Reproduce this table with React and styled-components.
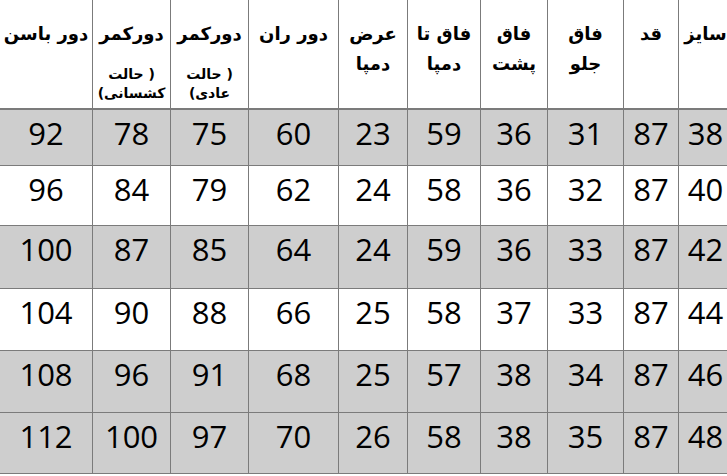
import React from "react";
import styled, { createGlobalStyle } from "styled-components";

const GlobalStyle = createGlobalStyle`
  html, body {
    margin: 0;
    padding: 0;
    background: #ffffff;
  }
`;

const LINE = "#7b7b7b";
const RLM = "\u200F";

const Frame = styled.div`
  width: 727px;
  height: 476px;
  overflow: hidden;
  background: #ffffff;
`;

const Table = styled.div`
  width: 732px;
  display: flex;
  flex-direction: column;
`;

const Row = styled.div`
  display: grid;
  grid-template-columns: 93px 78px 78px 90px 69px 73px 67px 76px 55px 53px;
  height: ${(props) => props.h}px;
  background: ${(props) => (props.shaded ? "#cecece" : "#ffffff")};
  border-bottom: ${(props) => (props.head ? 2 : 1)}px solid ${LINE};
  box-sizing: border-box;
`;

const HeadCell = styled.div`
  border-right: 1px solid ${LINE};
  box-sizing: border-box;
  direction: rtl;
  text-align: center;
  padding-top: 19px;
  font-family: "DejaVu Sans", "Liberation Sans", sans-serif;
  font-weight: bold;
  font-size: 18px;
  line-height: 30px;
  color: #000;
  white-space: nowrap;

  &:last-child {
    border-right: none;
  }
`;

const SubNote = styled.div`
  margin-top: 16px;
  font-size: 14px;
  line-height: 19px;
`;

const Cell = styled.div`
  border-right: 1px solid ${LINE};
  box-sizing: border-box;
  text-align: center;
  padding-top: 8px;
  font-family: "Open Sans", "Liberation Sans", sans-serif;
  font-size: 31px;
  line-height: 31px;
  color: #000;

  &:last-child {
    border-right: none;
  }
`;

// RLM marks keep the wrapped brackets on the reading side seen in the sheet
const headers = [
  { lines: ["دور باسن"] },
  { lines: ["دورکمر"], note: [RLM + "( حالت", "کشسانی)" + RLM] },
  { lines: ["دورکمر"], note: [RLM + "( حالت", "عادی)" + RLM] },
  { lines: ["دور ران"] },
  { lines: ["عرض", "دمپا"] },
  { lines: ["فاق تا", "دمپا"] },
  { lines: ["فاق", "پشت"] },
  { lines: ["فاق", "جلو"] },
  { lines: ["قد"] },
  { lines: ["سایز"] },
];

// left to right: باسن, کمر کشسانی, کمر عادی, ران, عرض دمپا, فاق تا دمپا, فاق پشت, فاق جلو, قد, سایز
const rows = [
  { h: 56, shaded: true, v: [92, 78, 75, 60, 23, 59, 36, 31, 87, 38] },
  { h: 60, shaded: false, v: [96, 84, 79, 62, 24, 58, 36, 32, 87, 40] },
  { h: 63, shaded: true, v: [100, 87, 85, 64, 24, 59, 36, 33, 87, 42] },
  { h: 62, shaded: false, v: [104, 90, 88, 66, 25, 58, 37, 33, 87, 44] },
  { h: 62, shaded: true, v: [108, 96, 91, 68, 25, 57, 38, 34, 87, 46] },
  { h: 61, shaded: true, v: [112, 100, 97, 70, 26, 58, 38, 35, 87, 48] },
];

const App = () => {
  return (
    <>
      <GlobalStyle />
      <Frame>
        <Table>
          <Row h={110} head>
            {headers.map((hd, i) => (
              <HeadCell key={i}>
                {hd.lines.map((l, j) => (
                  <div key={j}>{l}</div>
                ))}
                {hd.note && (
                  <SubNote>
                    {hd.note.map((l, j) => (
                      <div key={j}>{l}</div>
                    ))}
                  </SubNote>
                )}
              </HeadCell>
            ))}
          </Row>
          {rows.map((r, i) => (
            <Row key={i} h={r.h} shaded={r.shaded}>
              {r.v.map((n, j) => (
                <Cell key={j}>{n}</Cell>
              ))}
            </Row>
          ))}
        </Table>
      </Frame>
    </>
  );
};

export default App;
